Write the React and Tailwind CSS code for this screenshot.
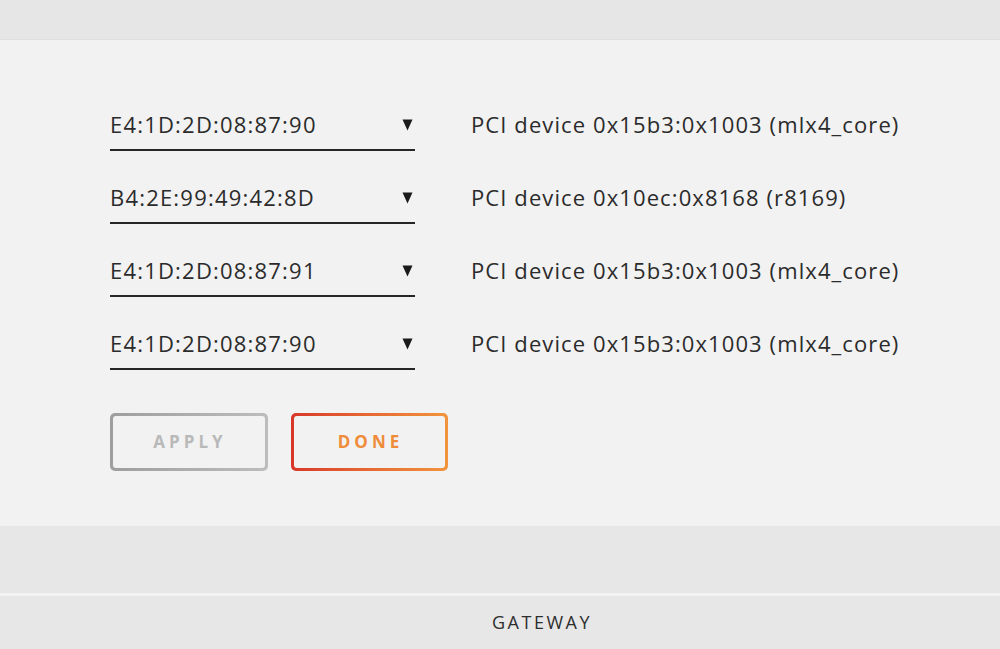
import React from 'react';

const rows = [
  { mac: 'E4:1D:2D:08:87:90', device: 'PCI device 0x15b3:0x1003 (mlx4_core)' },
  { mac: 'B4:2E:99:49:42:8D', device: 'PCI device 0x10ec:0x8168 (r8169)' },
  { mac: 'E4:1D:2D:08:87:91', device: 'PCI device 0x15b3:0x1003 (mlx4_core)' },
  { mac: 'E4:1D:2D:08:87:90', device: 'PCI device 0x15b3:0x1003 (mlx4_core)' },
];

const MacSelect = ({ mac }) => (
  <div className="w-[305px] h-[43px] flex items-center justify-between border-b-2 border-[#262626] pb-[9px]">
    <span className="text-[22px] tracking-[1.2px] text-[#2b2b2b] leading-none">{mac}</span>
    <svg width="11" height="12" viewBox="0 0 11 12" className="mr-[2px] mt-[2px]">
      <path d="M0.5 0.5 H10.5 L5.5 11.5 Z" fill="#1a1a1a" />
    </svg>
  </div>
);

const App = () => {
  return (
    <div className="w-[1000px] h-[649px] flex flex-col bg-[#e7e7e7] overflow-hidden" style={{ fontFamily: '"Open Sans", "Noto Sans", sans-serif' }}>
      {/* top strip */}
      <div className="h-[40px] bg-[#e6e6e6] border-b border-[#e0e0e0]" />

      {/* main panel */}
      <div className="h-[486px] bg-[#f2f2f2] pl-[110px] pt-[68px]">
        <div className="flex flex-col gap-[30px]">
          {rows.map((r, i) => (
            <div key={i} className="flex items-center gap-[56px]">
              <MacSelect mac={r.mac} />
              <span className="text-[22px] tracking-[1.1px] text-[#2b2b2b] leading-none -mt-[11px]">{r.device}</span>
            </div>
          ))}
        </div>

        <div className="flex gap-[23px] mt-[43px]">
          <div className="w-[158px] h-[58px] rounded-[5px] p-[3px] bg-gradient-to-r from-[#9e9e9e] to-[#bdbdbd]">
            <div className="w-full h-full rounded-[3px] bg-[#f2f2f2] flex items-center justify-center">
              <span className="text-[17px] font-bold tracking-[4px] text-[#b9b9b9] pl-[2px]">APPLY</span>
            </div>
          </div>
          <div className="w-[157px] h-[58px] rounded-[5px] p-[3px] bg-gradient-to-r from-[#d8362a] to-[#f1943d]">
            <div className="w-full h-full rounded-[3px] bg-[#f2f2f2] flex items-center justify-center">
              <span className="text-[17px] font-bold tracking-[4px] text-[#ef8c3a] pl-[2px]">DONE</span>
            </div>
          </div>
        </div>
      </div>

      {/* lower strip */}
      <div className="h-[67px] bg-[#e7e7e7]" />
      <div className="h-[3px] bg-[#f3f3f3]" />

      {/* footer */}
      <div className="flex-1 bg-[#e7e7e7] flex items-center justify-center">
        <span className="text-[18px] tracking-[2.5px] text-[#2e2e2e] pl-[84px] -mt-[1px]">GATEWAY</span>
      </div>
    </div>
  );
};

export default App;
